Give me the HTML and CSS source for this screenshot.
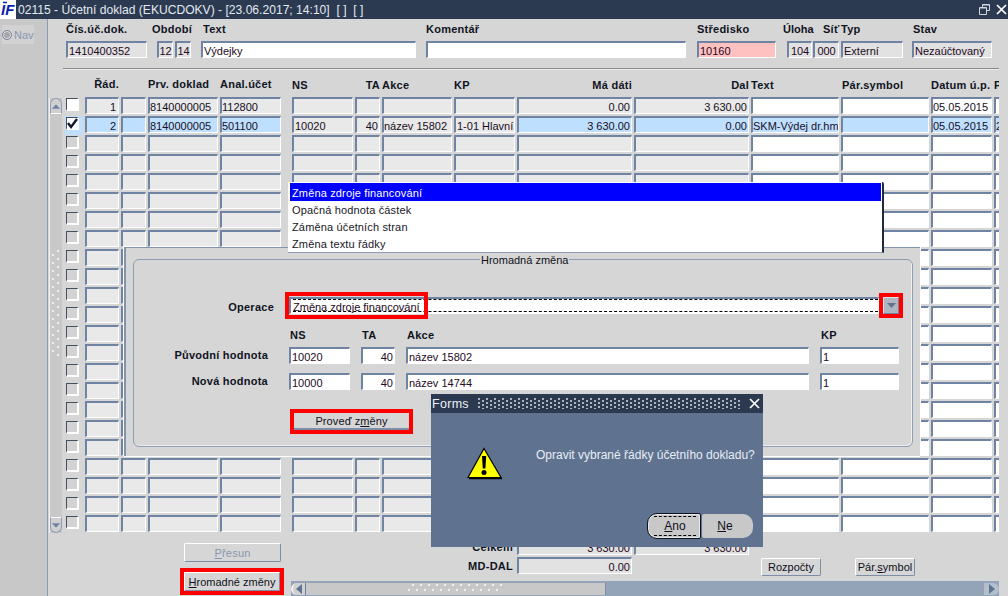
FILE: index.html
```html
<!DOCTYPE html>
<html lang="cs">
<head>
<meta charset="utf-8">
<title>Účetní doklad</title>
<link rel="stylesheet" href="styles.css">
</head>
<body>
<header class="titlebar">
  <svg class="logo" width="16" height="19" viewBox="0 0 16 19"><rect width="16" height="19" fill="#fff"/><path d="M3 2.500h4" stroke="#0a1fb0" stroke-width="1.500"/><text class="logotxt" x="1" y="15">IF</text></svg>
  <span class="wintitle">02115 - Účetní doklad (EKUCDOKV) - [23.06.2017; 14:10]&nbsp; [ ]&nbsp; [ ]</span>
  <span class="winbtns">
    <svg width="11" height="11" viewBox="0 0 11 11"><path d="M3.500 3V.5h7v6H8M.5 3.500h7v7h-7z" fill="none" stroke="#cfd6df"/><path d="M.5 4h7M3.500 1h7" stroke="#cfd6df"/></svg>
    <svg width="11" height="11" viewBox="0 0 11 11"><path d="M1 1l9 9M10 1l-9 9" stroke="#fff" stroke-width="1.700"/></svg>
  </span>
</header>
<div class="app">
  <aside class="side"><div class="nav"><span class="radio"></span>Nav</div></aside>
  <main class="main">
    <section class="top">
      <div class="g w81"><label>Čís.úč.dok.</label><div class="fld ro">1410400352</div></div>
      <div class="g w34"><label class="lm5">Období</label><div class="pair"><div class="fld ro num">12</div><div class="fld ro num">14</div></div></div>
      <div class="g w215"><label class="lp2">Text</label><div class="fld wh">Výdejky</div></div>
      <div class="g w260"><label>Komentář</label><div class="fld wh"></div></div>
      <div class="g w79"><label>Středisko</label><div class="fld pink">10160</div></div>
      <div class="g w25"><label class="lm4">Úloha</label><div class="fld ro num">104</div></div>
      <div class="g w26"><label class="lp10">Síť</label><div class="fld ro num">000</div></div>
      <div class="g w62"><label>Typ</label><div class="fld ro">Externí</div></div>
      <div class="g w80"><label class="lp1">Stav</label><div class="fld ro">Nezaúčtovaný</div></div>
    </section>
    <hr class="sep">
    <section class="heads cols">
      <span></span><span class="up rt">Řád.</span><span></span><span class="up">Prv. doklad</span><span class="up">Anal.účet</span><span></span>
      <span>NS</span><span class="rt">TA</span><span>Akce</span><span>KP</span><span class="rt">Má dáti</span><span class="rt">Dal</span><span>Text</span><span class="par">Pár.symbol</span><span>Datum ú.p.</span><span>P</span>
    </section>
    <section class="tablewrap">
      <div class="vscroll">
        <div class="vbtn vup"><svg width="11" height="7" viewBox="0 0 11 7"><path d="M5.500 1L10 6H1z" fill="#6f84a3"/></svg></div>
        <div class="vgrip"></div>
        <div class="vbtn vdn"><svg width="11" height="7" viewBox="0 0 11 7"><path d="M1 1h9L5.500 6z" fill="#6f84a3"/></svg></div>
      </div>
      <div class="rows">
        <div class="row"><span class="cb on"></span><span class="r">1</span><span></span><span>8140000005</span><span>112800</span><span></span><span></span><span></span><span></span><span></span><span class="r">0.00</span><span class="r">3 630.00</span><span></span><span></span><span>05.05.2015</span><span></span></div>
        <div class="row sel"><span class="cb on chk"><svg width="13" height="13" viewBox="0 0 13 13"><path d="M2 6l3 4 6-8" fill="none" stroke="#111a2a" stroke-width="2.400"/></svg></span><span class="r">2</span><span></span><span>8140000005</span><span>501100</span><span></span><span>10020</span><span class="r">40</span><span>název 15802</span><span>1-01 Hlavní činnost</span><span class="r">3 630.00</span><span class="r">0.00</span><span>SKM-Výdej dr.hm</span><span></span><span>05.05.2015</span><span>2</span></div>
        <div class="row"><span class="cb"></span><span></span><span></span><span></span><span></span><span></span><span></span><span></span><span></span><span></span><span></span><span></span><span></span><span></span><span></span><span></span></div>
        <div class="row"><span class="cb"></span><span></span><span></span><span></span><span></span><span></span><span></span><span></span><span></span><span></span><span></span><span></span><span></span><span></span><span></span><span></span></div>
        <div class="row"><span class="cb"></span><span></span><span></span><span></span><span></span><span></span><span></span><span></span><span></span><span></span><span></span><span></span><span></span><span></span><span></span><span></span></div>
        <div class="row"><span class="cb"></span><span></span><span></span><span></span><span></span><span></span><span></span><span></span><span></span><span></span><span></span><span></span><span></span><span></span><span></span><span></span></div>
        <div class="row"><span class="cb"></span><span></span><span></span><span></span><span></span><span></span><span></span><span></span><span></span><span></span><span></span><span></span><span></span><span></span><span></span><span></span></div>
        <div class="row"><span class="cb"></span><span></span><span></span><span></span><span></span><span></span><span></span><span></span><span></span><span></span><span></span><span></span><span></span><span></span><span></span><span></span></div>
        <div class="row"><span class="cb"></span><span></span><span></span><span></span><span></span><span></span><span></span><span></span><span></span><span></span><span></span><span></span><span></span><span></span><span></span><span></span></div>
        <div class="row"><span class="cb"></span><span></span><span></span><span></span><span></span><span></span><span></span><span></span><span></span><span></span><span></span><span></span><span></span><span></span><span></span><span></span></div>
        <div class="row"><span class="cb"></span><span></span><span></span><span></span><span></span><span></span><span></span><span></span><span></span><span></span><span></span><span></span><span></span><span></span><span></span><span></span></div>
        <div class="row"><span class="cb"></span><span></span><span></span><span></span><span></span><span></span><span></span><span></span><span></span><span></span><span></span><span></span><span></span><span></span><span></span><span></span></div>
        <div class="row"><span class="cb"></span><span></span><span></span><span></span><span></span><span></span><span></span><span></span><span></span><span></span><span></span><span></span><span></span><span></span><span></span><span></span></div>
        <div class="row"><span class="cb"></span><span></span><span></span><span></span><span></span><span></span><span></span><span></span><span></span><span></span><span></span><span></span><span></span><span></span><span></span><span></span></div>
        <div class="row"><span class="cb"></span><span></span><span></span><span></span><span></span><span></span><span></span><span></span><span></span><span></span><span></span><span></span><span></span><span></span><span></span><span></span></div>
        <div class="row"><span class="cb"></span><span></span><span></span><span></span><span></span><span></span><span></span><span></span><span></span><span></span><span></span><span></span><span></span><span></span><span></span><span></span></div>
        <div class="row"><span class="cb"></span><span></span><span></span><span></span><span></span><span></span><span></span><span></span><span></span><span></span><span></span><span></span><span></span><span></span><span></span><span></span></div>
        <div class="row"><span class="cb"></span><span></span><span></span><span></span><span></span><span></span><span></span><span></span><span></span><span></span><span></span><span></span><span></span><span></span><span></span><span></span></div>
        <div class="row"><span class="cb"></span><span></span><span></span><span></span><span></span><span></span><span></span><span></span><span></span><span></span><span></span><span></span><span></span><span></span><span></span><span></span></div>
        <div class="row"><span class="cb"></span><span></span><span></span><span></span><span></span><span></span><span></span><span></span><span></span><span></span><span></span><span></span><span></span><span></span><span></span><span></span></div>
        <div class="row"><span class="cb"></span><span></span><span></span><span></span><span></span><span></span><span></span><span></span><span></span><span></span><span></span><span></span><span></span><span></span><span></span><span></span></div>
        <div class="row"><span class="cb"></span><span></span><span></span><span></span><span></span><span></span><span></span><span></span><span></span><span></span><span></span><span></span><span></span><span></span><span></span><span></span></div>
        <div class="row"><span class="cb"></span><span></span><span></span><span></span><span></span><span></span><span></span><span></span><span></span><span></span><span></span><span></span><span></span><span></span><span></span><span></span></div>
      </div>
    </section>
    <section class="foot">
      <div class="footleft">
        <button class="btn dis"><u>P</u>řesun</button>
        <button class="btn mark"><u>H</u>romadné změny</button>
      </div>
      <div class="footright">
        <div class="totrow">
          <label class="totlab">Celkem</label><div class="fld ro r">3 630.00</div><div class="fld ro r">3 630.00</div>
        </div>
        <div class="totrow">
          <label class="totlab">MD-DAL</label><div class="fld ro r">0.00</div><div class="totgap"></div>
          <button class="btn sm first">Rozpočty</button><button class="btn sm">Pár.<u>s</u>ymbol</button>
        </div>
        <div class="hscroll">
          <div class="hbtn"><svg width="7" height="10" viewBox="0 0 7 10"><path d="M6 0v10L0 5z" fill="#5f7391"/></svg></div>
          <div class="hthumb"><div class="hgrip"></div></div>
          <div class="hbtn hend"><svg width="7" height="10" viewBox="0 0 7 10"><path d="M1 0v10l6-5z" fill="#5f7391"/></svg></div>
        </div>
      </div>
    </section>
  </main>
</div>

<section class="panel">
  <div class="fs">
    <span class="legend">Hromadná změna</span>
    <div class="oprow">
      <label class="oplab">Operace</label>
      <div class="fld wh opfld"><span class="focus">Změna zdroje financování</span><span class="opmark"></span></div>
      <div class="arrow"><svg width="9" height="5" viewBox="0 0 9 5"><path d="M0 0h9L4.500 5z" fill="#64748f"/></svg></div>
    </div>
    <div class="form">
      <span></span><label class="fh">NS</label><label class="fh">TA</label><label class="fh">Akce</label><label class="fh">KP</label>
      <label class="rlab">Původní hodnota</label><div class="fld wh">10020</div><div class="fld wh r">40</div><div class="fld wh">název 15802</div><div class="fld wh">1</div>
      <label class="rlab">Nová hodnota</label><div class="fld wh">10000</div><div class="fld wh r">40</div><div class="fld wh">název 14744</div><div class="fld wh">1</div>
    </div>
    <button class="btn flat mark">Proveď z<u>m</u>ěny</button>
  </div>
</section>

<ul class="popup">
  <li class="cur">Změna zdroje financování</li>
  <li>Opačná hodnota částek</li>
  <li>Záměna účetních stran</li>
  <li>Změna textu řádky</li>
</ul>

<section class="alert">
  <div class="altitle"><span>Forms</span><div class="algrip"></div><svg width="11" height="11" viewBox="0 0 11 11"><path d="M1 1l9 9M10 1l-9 9" stroke="#fff" stroke-width="1.700"/></svg></div>
  <div class="albody">
    <svg class="warn" width="37" height="33" viewBox="0 0 37 33"><path d="M18 1.500L35 30.500H2z" fill="#ffff00" stroke="#000" stroke-width="1.200"/><path d="M3 31.500h33" stroke="#000" stroke-width="1.500"/><path d="M16 9h4.200l-.8 12.500h-2.600z" fill="#000"/><circle cx="18" cy="25.500" r="2.500" fill="#000"/></svg>
    <p class="msg">Opravit vybrané řádky účetního dokladu?</p>
  </div>
  <div class="albtns">
    <button class="abtn yes"><span class="yesin"><u>A</u>no</span></button>
    <button class="abtn no"><u>N</u>e</button>
  </div>
</section>
</body>
</html>
```
FILE: styles.css
```css
* { box-sizing: border-box; }
html, body { margin: 0; height: 596px; overflow: hidden; }
body { position: relative; width: 1008px; background: #d6d6d6; font: 11px/14px "Liberation Sans", Arial, sans-serif; color: #101020; }
label { font-weight: bold; letter-spacing: .25px; white-space: nowrap; color: #10141f; }
u { text-underline-offset: 1px; }

.titlebar { height: 19px; background: #2b3a50; display: flex; align-items: center; color: #e4e9f0; }
.logo { flex: none; }
.logotxt { font: italic bold 15px "Liberation Sans", Arial, sans-serif; fill: #0a1fb0; }
.wintitle { margin-left: 2px; font-size: 12.100px; white-space: pre; }
.winbtns { margin-left: auto; display: flex; gap: 6px; padding-right: 1px; }

.app { display: flex; height: 577px; }
.side { width: 47px; background: #c8c8c8; padding: 6px 2px; flex: none; }
.nav { width: 32px; height: 19px; background: #d2d2d2; color: #8797b0; display: flex; align-items: center; gap: 2px; }
.radio { width: 10px; height: 10px; border-radius: 50%; background: #a7a7a7; border: 1px solid #76879f; box-shadow: inset 0 0 0 1px #ddd; }

.main { flex: 1; border-left: 1px solid #8c9db6; min-width: 0; }

.top { display: flex; padding: 4px 0 0 18px; }
.g { flex: none; margin-left: 10px; display: flex; flex-direction: column; }
.g:first-child { margin-left: 0; }
.g label { height: 12px; line-height: 12px; margin-bottom: 6px; }
.w81 { width: 81px; } .w34 { width: 34px; } .w215 { width: 215px; } .w260 { width: 260px; }
.w79 { width: 79px; margin-left: 11px; } .w25 { width: 25px; margin-left: 11px; }
.w26 { width: 26px; margin-left: 1px; } .w62 { width: 62px; margin-left: 2px; } .w80 { width: 80px; margin-left: 9px; }
.lm5 { margin-left: -5px; } .lm4 { margin-left: -4px; letter-spacing: 0; } .lp10 { margin-left: 10px; } .lp2 { margin-left: 2px; } .lp1 { margin-left: 1px; }
.pair { display: flex; gap: 2px; }
.pair .fld { width: 16px; }

.fld { height: 17px; border: 2px solid; border-color: #6f84a3 #fff #fff #6f84a3; border-width: 2px 1px 1px 2px; padding: 0 1px; line-height: 16px; white-space: nowrap; overflow-x: clip; overflow-y: visible; color: #240a24; }
.ro { background: #e2e2e2; }
.wh { background: #fff; }
.pink { background: #ffc0c0; }
.num { padding: 0; text-align: center; letter-spacing: -.1px; }
.r { text-align: right; }

.sep { margin: 10px 0 0 15px; height: 2px; border: 0; border-top: 1px solid #8a8a8a; border-bottom: 1px solid #eee; width: 936px; }

.cols { display: grid; grid-template-columns: 18px 34px 25px 70px 61px 7px 61px 25px 70px 61px 115px 115px 88px 88px 61px 16px; column-gap: 2px; }
.heads { margin: 7px 0 0 17px; width: 934px; height: 20px; overflow: hidden; font-weight: bold; letter-spacing: .25px; color: #10141f; white-space: nowrap; align-items: start; padding-top: 1px; }
.heads span { display: block; }
.heads .up { margin-top: -1px; }
.heads .rt { text-align: right; }
.heads .par { padding-left: 1px; }

.tablewrap { display: flex; }
.vscroll { width: 13px; margin: 1px 3px 0 1px; height: 435px; background: #c8c8c8; border-left: 1px solid #f2f2f2; display: flex; flex-direction: column; justify-content: space-between; position: relative; }
.vbtn { height: 16px; display: flex; align-items: center; justify-content: center; background: #d0d0d0; border: 1px solid #8c9db6; }
.vup { border-radius: 7px 7px 0 0; border-bottom-color: #fff; }
.vdn { border-radius: 0 0 7px 7px; border-top-color: #fff; }
.vgrip { position: absolute; left: 2px; top: 152px; width: 9px; height: 106px; background:
  radial-gradient(circle at 6px 1px, #f0f0f0 .9px, transparent 1.100px) 0 0 / 9px 8px,
  radial-gradient(circle at 1px 5px, #f0f0f0 .9px, transparent 1.100px) 0 0 / 9px 8px; }

.rows { width: 934px; overflow: hidden; flex: none; }
.row { display: grid; grid-template-columns: 18px 34px 25px 70px 61px 7px 61px 25px 70px 61px 115px 115px 88px 88px 61px 16px; column-gap: 2px; height: 17px; margin-bottom: 2px; }
.row > span { display: block; min-width: 0; height: 17px; border-style: solid; border-color: #6f84a3 #fff #fff #6f84a3; border-width: 2px 1px 1px 2px; background: #e9e9e9; padding: 0; line-height: 16px; white-space: nowrap; overflow-x: clip; overflow-y: visible; color: #16101f; }
.row > span:nth-child(6) { background: none; border: 0; }
.row > span:nth-child(7), .row > span:nth-child(10) { padding-left: 1px; }
.row > span:nth-child(n+13) { background: #fff; }
.row > span.r { padding-right: 1px; text-align: right; }
.row > span.r:nth-child(2) { padding-right: 2px; }
.row > span.cb { width: 13px; height: 13px; margin: 1px 0 0 1px; padding: 0; background: #d3d3d3; border-color: #45505f #fff #fff #45505f; border-width: 1px 2px 2px 1px; overflow: visible; }
.row > span.cb.on { background: #fff; }
.row > span.chk svg { display: block; margin: -1px; }
.sel { background: linear-gradient(#bfdfff, #bfdfff) 0 0 / 18px 19px no-repeat; height: 19px !important; margin-bottom: 0 !important; }
.sel > span:nth-child(n+2):nth-child(-n+5), .sel > span:nth-child(n+11) { background: #bfdfff !important; }
.sel > span:nth-child(n+7):nth-child(-n+10) { background: #e9e9e9; }

.foot { display: flex; margin-top: -1px; }
.footleft { width: 243px; padding: 10px 0 0 136px; display: flex; flex-direction: column; gap: 10px; flex: none; }
.footleft .btn { width: 97px; height: 19px; }
.footleft .btn.mark { width: 96px; letter-spacing: 0; }
.footright { width: 708px; flex: none; padding-top: 5px; }
.totrow { display: flex; height: 19px; gap: 2px; align-items: flex-start; }
.totlab { width: 224px; text-align: right; padding-right: 2px; line-height: 18px; }
.totrow .fld { width: 115px; flex: none; }
.totgap { width: 125px; flex: none; }
.btn { display: block; background: #d6d6d6; font: 11px/14px "Liberation Sans", Arial, sans-serif; color: #101020; border: 1px solid; border-color: #fff #7d8ea8 #7d8ea8 #fff; border-radius: 2px; padding: 0; text-align: center; white-space: nowrap; letter-spacing: .2px; }
.dis { color: #8797b0; }
.mark { outline: 4px solid #ff0000; border-radius: 0; }
.sm { width: 60px; height: 18px; margin-top: 1px; flex: none; letter-spacing: 0; }
.sm.first { margin-right: 32px; }
.hscroll { margin-top: 5px; height: 15px; background: #94a4b8; display: flex; justify-content: space-between; position: relative; padding-top: 2px; }
.hbtn { width: 15px; height: 12px; background: #d0d0d0; border-left: 2px solid #f2f2f2; border-right: 1px solid #6f84a3; border-radius: 7px 0 0 7px; display: flex; align-items: center; justify-content: center; flex: none; }
.hend { border-left: 0; border-right: 0; border-radius: 0 6px 6px 0; background: #b4bfcd; }
.hthumb { position: absolute; left: 15px; top: 2px; width: 300px; height: 12px; background: #c8c8c8; border-right: 1px solid #7d8ea8; }
.hgrip { position: absolute; left: 102px; top: 1px; width: 96px; height: 9px; background:
  radial-gradient(circle at 5px 1px, #f0f0f0 .9px, transparent 1.100px) 0 0 / 8px 9px,
  radial-gradient(circle at 1px 6px, #f0f0f0 .9px, transparent 1.100px) 0 0 / 8px 9px; }

.panel { position: absolute; left: 124px; top: 247px; width: 796px; height: 209px; background: #d6d6d6; border-left: 2px solid #8293ad; border-top: 1px solid #8293ad; box-shadow: -1px 0 0 #fff, 0 1px 0 #fff, 1px 0 0 #fff; padding: 11px 7px 0 7px; }
.fs { position: relative; width: 780px; height: 188px; border: 1px solid #8c9db6; border-radius: 6px; box-shadow: inset -1px -1px 0 #eee; padding-top: 37px; }
.legend { position: absolute; left: 346px; top: -7px; background: #d6d6d6; padding: 0 1px; line-height: 14px; }
.oprow { display: flex; align-items: flex-start; }
.oplab { width: 140px; text-align: right; line-height: 20px; }
.opfld { position: relative; margin-left: 15px; width: 590px; overflow: visible; padding: 0 3px; }
.focus { display: block; height: 13px; border-top: 1px dashed #000; border-bottom: 1px dashed #000; margin-left: -1px; width: 585px; line-height: 14px; }
.opmark { position: absolute; left: -6px; top: -7px; width: 143px; height: 27px; border: 4px solid #ff0000; }
.arrow { margin-left: 4px; width: 16px; height: 17px; background: #aeb6c2; border: 1px solid; border-color: #e6e6e6 #6f84a3 #6f84a3 #e6e6e6; outline: 4px solid #ff0000; display: flex; align-items: center; justify-content: center; }
.form { display: grid; grid-template-columns: 144px 61px 34px 403px 79px; column-gap: 11px; margin-top: 12px; grid-template-rows: 18px 26px 17px; }
.form > label { padding-left: 1px; }
.form > .fh { margin-top: -1px; }
.form > .rlab { text-align: right; padding: 0; line-height: 17px; margin-right: 10px; }
.form > .fld { height: 17px; }
.flat { margin: 23px 0 0 160px; width: 115px; height: 17px; border-color: #e8e8e8 #d6d6d6 #7d8ea8 #e8e8e8; border-width: 0 0 2px; letter-spacing: .1px; }

.popup { position: absolute; left: 288px; top: 182px; width: 596px; height: 71px; margin: 0; padding: 1px 0 0 2px; list-style: none; background: #fff; border-right: 2px solid #1d2a40; border-bottom: 1px solid #8c9db6; border-top-right-radius: 2px; letter-spacing: .15px; }
.popup li { height: 17px; line-height: 19px; padding-left: 2px; margin-right: 1px; color: #18161f; }
.popup .cur { background: #0000ff; color: #fff; height: 18px; line-height: 20px; }

.alert { position: absolute; left: 431px; top: 394px; width: 332px; height: 153px; background: #5f7391; color: #e8edf3; display: flex; flex-direction: column; }
.altitle { height: 19px; background: #2b3a50; display: flex; align-items: center; padding: 0 3px 0 1px; gap: 9px; color: #eef1f5; flex: none; }
.altitle span { font-size: 12.500px; letter-spacing: .3px; }
.algrip { flex: 1; height: 11px; background:
  radial-gradient(circle at 1px 1px, #aab2be .8px, transparent 1px) 0 0 / 8px 4px,
  radial-gradient(circle at 5px 3px, #aab2be .8px, transparent 1px) 0 0 / 8px 4px; }
.albody { flex: 1; display: flex; padding: 34px 0 0 35px; align-items: flex-start; }
.warn { flex: none; }
.msg { margin: 1px 0 0 33px; font-size: 12px; line-height: 14px; white-space: nowrap; }
.albtns { display: flex; justify-content: flex-end; gap: 1px; padding: 0 10px 8px 0; align-items: center; }
.abtn { background: #c8c8c8; border: 0; padding: 0; font: 12px "Liberation Sans", Arial, sans-serif; color: #101020; }
.yes { width: 54px; height: 26px; border: 1px solid #0c1422; border-radius: 10px 2px 2px 10px; display: flex; align-items: center; justify-content: center; box-shadow: inset 0 0 0 1px #e8e8e8; padding-left: 2px; }
.yesin { width: 42px; height: 20px; line-height: 18px; border-top: 1px dashed #000; border-bottom: 1px dashed #000; text-align: center; }
.no { width: 51px; height: 24px; border-radius: 2px 10px 10px 2px; padding-right: 5px; }
```
